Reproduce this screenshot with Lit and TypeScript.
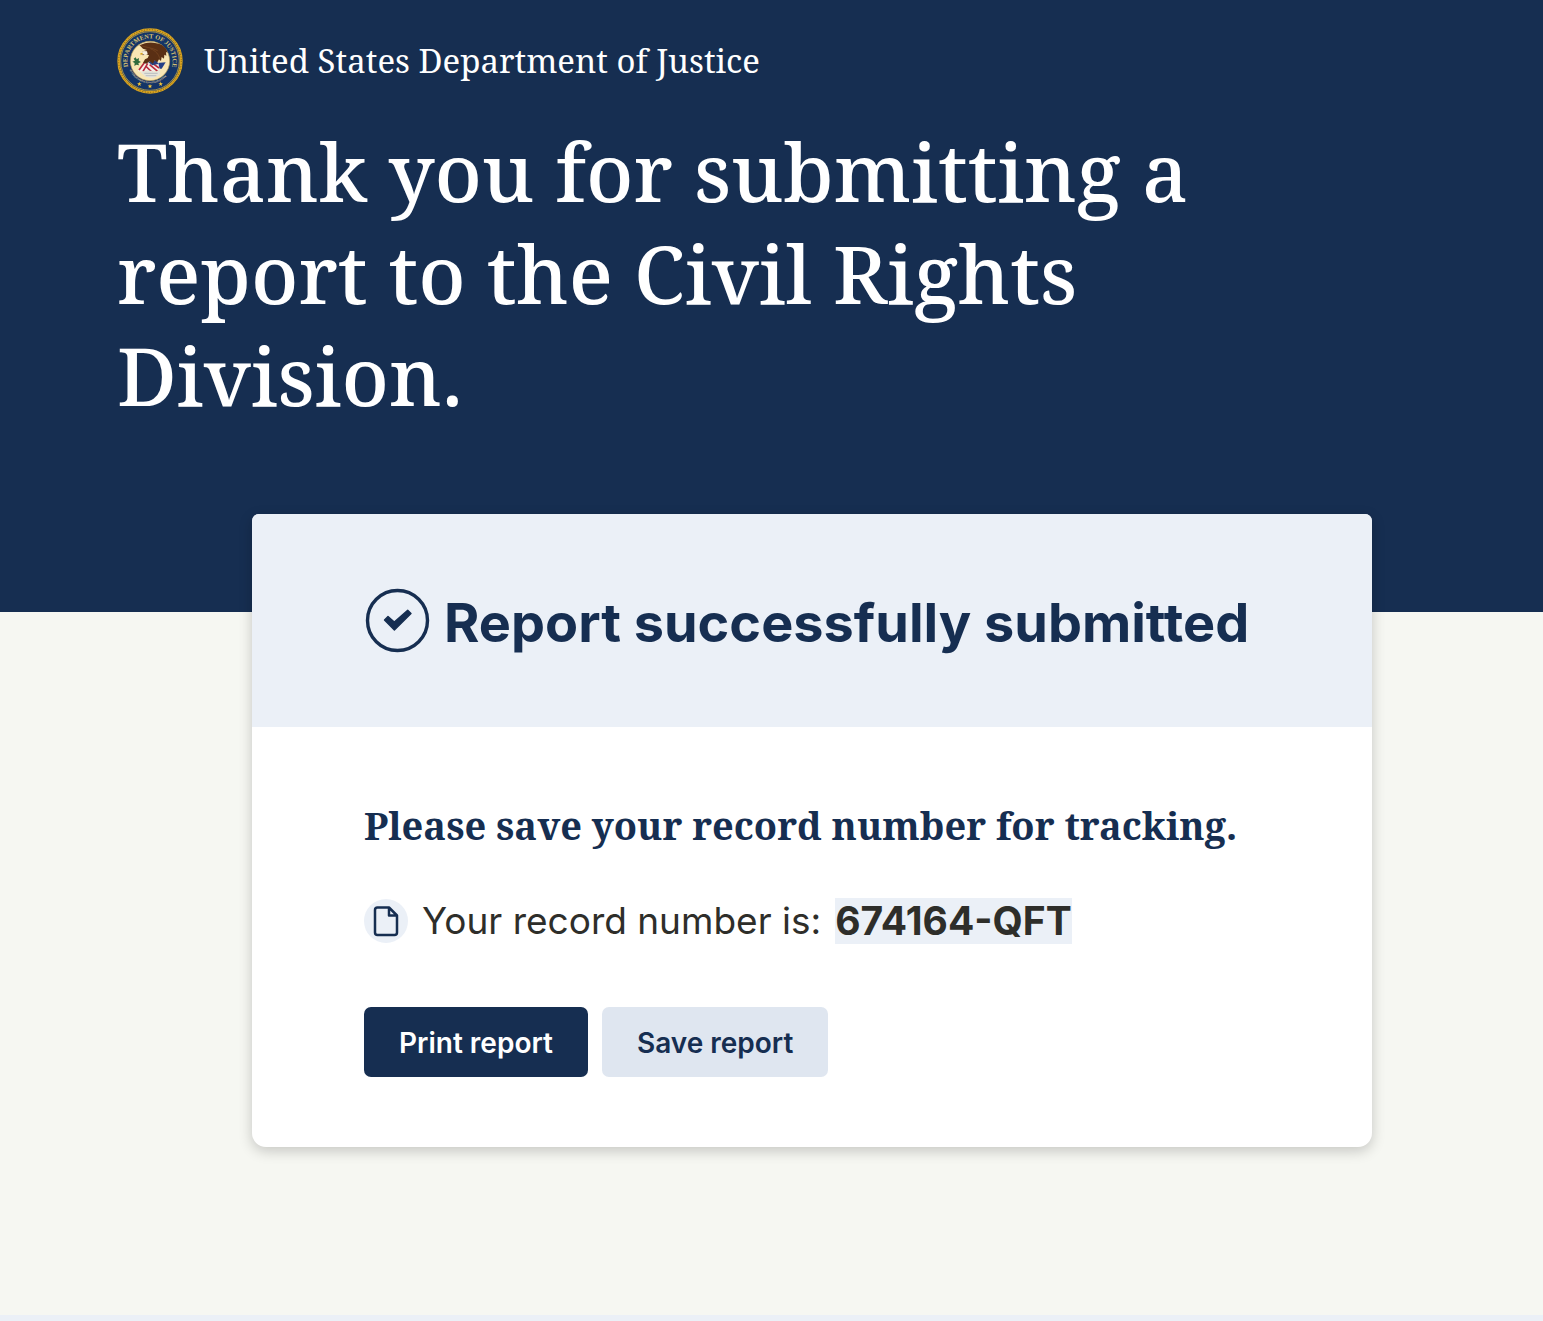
import { LitElement, html, css, svg } from "lit";
import { customElement, property } from "lit/decorators.js";

@customElement("agency-seal")
export class AgencySeal extends LitElement {
  static styles = css`
    :host {
      display: block;
      flex: none;
      width: 66px;
      height: 66px;
    }
    .seal {
      display: block;
      width: 100%;
      height: 100%;
    }
    .ring-text {
      font: 700 19px "Liberation Serif", serif;
      fill: #d8c274;
    }
    .motto {
      font: 700 7px "Liberation Serif", serif;
      fill: #e6dcae;
    }
  `;

  private star(x: number, y: number) {
    return svg`<path transform="translate(${x} ${y})" fill="#f4c63a"
      d="M0 -7 L1.8 -2.2 L7 -2.2 L2.8 1 L4.4 6 L0 3 L-4.4 6 L-2.8 1 L-7 -2.2 L-1.8 -2.2 Z" />`;
  }

  render() {
    return html`
      <svg class="seal" viewBox="0 0 198 198" role="img" aria-label="Department of Justice seal">
        <circle cx="99" cy="99" r="94" fill="#143467" stroke="#d9a420" stroke-width="8" />
        <circle cx="99" cy="99" r="94" fill="none" stroke="#7d5e18" stroke-width="3" stroke-dasharray="3 5" />
        <circle cx="99" cy="99" r="88" fill="none" stroke="#e6bb3c" stroke-width="2" />
        <path id="arc" d="M33 116 A68 68 0 1 1 163 122" fill="none" />
        <path id="motto" d="M38 125 A66 66 0 0 0 160 125" fill="none" />
        <text class="ring-text"><textPath href="#arc">DEPARTMENT OF JUSTICE</textPath></text>
        <circle cx="99" cy="99" r="59" fill="#f9e6b4" stroke="#b79c55" stroke-width="2" />
        <text class="motto"><textPath href="#motto">QUI PRO DOMINA JUSTITIA SEQUITUR</textPath></text>
        <path d="M112 106 L146 103 L134 122 L116 122 Z" fill="#243f86" />
        <path d="M82 104 L122 96 L128 124 L104 134 L62 130 Z" fill="#f7f1ec" />
        <path
          d="M82 104 L66 126 M92 106 L78 130 M86 114 L106 134 M98 110 L122 130 M104 104 L126 120"
          stroke="#b92b3e" stroke-width="5" fill="none"
        />
        <path d="M92 101 L118 96 L124 108 L106 112 Z" fill="#29417f" />
        <path d="M70 132 L92 127 L116 131 L130 124 L128 142 L106 151 L86 146 Z" fill="#e6e4da" />
        <path d="M82 136 H122 M86 143 H118" stroke="#a3a9b4" stroke-width="2" />
        <path
          d="M50 92 L56 88 L59 94 L66 90 L65 98 L72 102 L64 106 L66 112 L58 110 L52 114 L53 105 L46 101 L54 98 Z"
          fill="#2f6b3c"
        />
        <path
          d="M68 52 C82 45 100 41 118 46 C138 50 150 60 151 74 L147 72 L148 83 L142 80 L141 92 L134 87 L132 99 L126 94 L121 103 L113 97 L108 107 L98 100 L88 107 L78 104 L84 94 L92 90 L96 82 L86 78 L78 82 L72 78 L78 70 L90 66 L78 62 Z"
          fill="#5a2f14"
        />
        <path d="M68 52 C84 58 104 58 122 68 M100 62 C116 68 126 80 128 92" stroke="#7b4a22" stroke-width="2" fill="none" />
        <path d="M70 75 L80 69 L90 70 L92 78 L84 81 L78 79 L71 82 Z" fill="#f6efe0" />
        <path d="M70 75 L78 74 L76 79 L71 82 Z" fill="#d9a520" />
        ${this.star(67, 168)} ${this.star(99, 175)} ${this.star(131, 168)}
      </svg>
    `;
  }
}

@customElement("app-root")
export class AppRoot extends LitElement {
  @property() recordNumber = "674164-QFT";

  static styles = css`
    :host {
      display: flex;
      flex-direction: column;
      min-height: 100vh;
      background: #f6f7f2;
      color: #2e2e2a;
      font-family: Inter, "Liberation Sans", sans-serif;
    }
    .hero {
      background: #162e51;
      color: #fff;
      padding: 28px 117px 186px;
      font-family: "Noto Serif", "DejaVu Serif", serif;
    }
    .brand {
      display: flex;
      align-items: center;
      gap: 21px;
      font-size: 33px;
      line-height: 66px;
    }
    .title {
      margin: 26px 0 0;
      max-width: 1120px;
      font-size: 81px;
      line-height: 102px;
      font-weight: 500;
    }
    .main {
      flex: 1;
      padding: 0 171px 168px 252px;
    }
    .card {
      max-width: 1120px;
      margin-top: -98px;
      border-radius: 7px 7px 14px 14px;
      background: #fff;
      box-shadow: 0 4px 14px rgba(0, 0, 0, 0.2);
    }
    .card-head {
      display: flex;
      align-items: flex-start;
      gap: 14px;
      padding: 74px 70px 69px 112px;
      border-radius: 7px 7px 0 0;
      background: #ebf0f7;
      color: #162e51;
    }
    .check {
      flex: none;
      width: 66px;
      height: 66px;
    }
    .status {
      margin: 0;
      font-size: 54px;
      line-height: 70px;
      font-weight: 700;
    }
    .card-body {
      padding: 70px 112px;
    }
    .save-note {
      margin: 0;
      color: #162e51;
      font-family: "Noto Serif", "DejaVu Serif", serif;
      font-size: 38px;
      line-height: 56px;
      font-weight: 700;
    }
    .record {
      display: flex;
      align-items: center;
      gap: 14px;
      margin: 45px 0 0;
      font-size: 37px;
      line-height: 46px;
    }
    .doc {
      flex: none;
      width: 44px;
      height: 44px;
    }
    .number {
      background: #ebf0f7;
      font-size: 39px;
      font-weight: 700;
    }
    .actions {
      display: flex;
      gap: 14px;
      margin-top: 63px;
    }
    .button {
      padding: 19px 35px 17px;
      border: 0;
      border-radius: 7px;
      font: 600 28px/34px Inter, "Liberation Sans", sans-serif;
      cursor: pointer;
      background: #162e51;
      color: #fff;
    }
    .button.secondary {
      background: #dfe6f0;
      color: #162e51;
    }
    .footer {
      height: 6px;
      background: #ebf0f7;
    }
  `;

  render() {
    return html`
      <header class="hero">
        <div class="brand"><agency-seal></agency-seal><span>United States Department of Justice</span></div>
        <h1 class="title">Thank you for submitting a report to the Civil Rights Division.</h1>
      </header>
      <main class="main">
        <section class="card">
          <div class="card-head">
            <svg class="check" viewBox="0 0 66 66" aria-hidden="true">
              <circle cx="33.5" cy="32.5" r="30" fill="none" stroke="#162e51" stroke-width="3.4" />
              <path
                d="M20.5 32 L24 28.5 L30.3 34 L43.7 22.3 L47 25.5 L30.4 42 Z"
                fill="#162e51" stroke="#162e51" stroke-width="1.4" stroke-linejoin="round"
              />
            </svg>
            <h2 class="status">Report successfully submitted</h2>
          </div>
          <div class="card-body">
            <h3 class="save-note">Please save your record number for tracking.</h3>
            <p class="record">
              <svg class="doc" viewBox="0 0 44 44" aria-hidden="true">
                <circle cx="22" cy="22" r="22" fill="#ebf0f7" />
                <path
                  d="M13.5 8.5 H25 L33 16.5 V33.5 Q33 36 30.5 36 H13.5 Q11 36 11 33.5 V11 Q11 8.5 13.5 8.5 Z M25 8.5 V16.5 H33"
                  fill="none" stroke="#162e51" stroke-width="2.5" stroke-linejoin="round"
                />
              </svg>
              <span>Your record number is:</span>
              <strong class="number">${this.recordNumber}</strong>
            </p>
            <div class="actions">
              <button class="button" type="button">Print report</button>
              <button class="button secondary" type="button">Save report</button>
            </div>
          </div>
        </section>
      </main>
      <footer class="footer"></footer>
    `;
  }
}
